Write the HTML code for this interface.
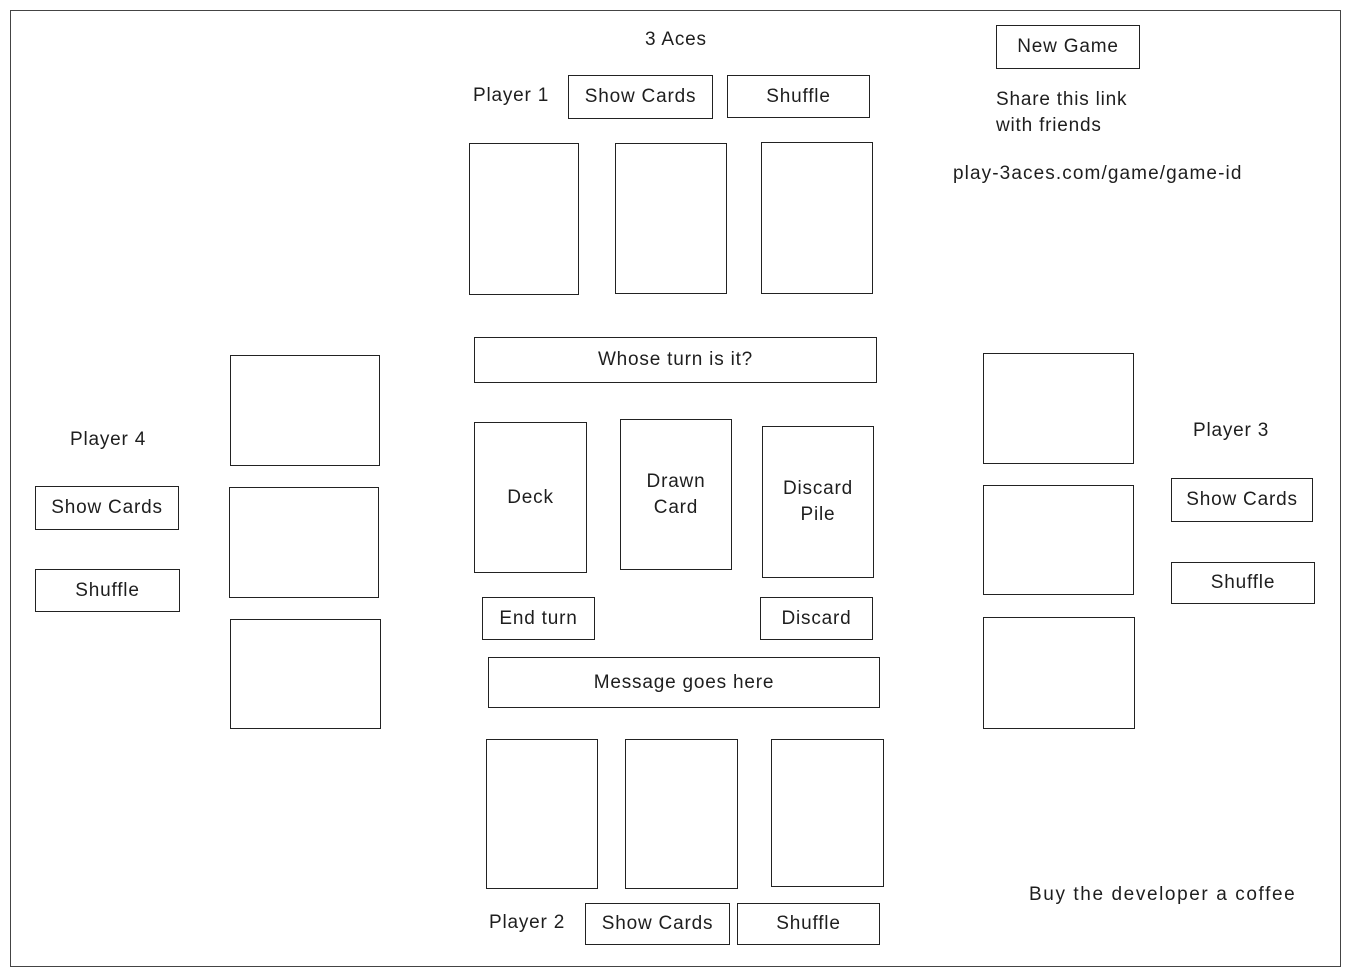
<!DOCTYPE html>
<html><head><meta charset="utf-8"><style>
body{margin:0;width:1349px;height:976px;background:#fff;position:relative;overflow:hidden;font-family:"Liberation Sans",sans-serif;color:#1e1e1e}
.b{position:absolute;border:1.8px solid #222;box-sizing:border-box;display:flex;align-items:center;justify-content:center;text-align:center;font-size:19px;line-height:26px;letter-spacing:0.8px}
.t{position:absolute;font-size:19px;white-space:nowrap;line-height:24px;letter-spacing:0.8px}
</style></head><body>
<div class="b" style="left:10px;top:10px;width:1331px;height:957px;border-color:#444"></div>
<div class="t" style="left:645px;top:28px">3 Aces</div>
<div class="b" style="left:996px;top:25px;width:144px;height:44px">New Game</div>
<div class="t" style="left:996px;top:87px;line-height:26px">Share this link<br>with friends</div>
<div class="t" style="left:953px;top:162px;letter-spacing:1.1px">play-3aces.com/game/game-id</div>

<div class="t" style="left:473px;top:84px">Player 1</div>
<div class="b" style="left:568px;top:75px;width:145px;height:44px">Show Cards</div>
<div class="b" style="left:727px;top:75px;width:143px;height:43px">Shuffle</div>
<div class="b" style="left:469px;top:143px;width:110px;height:152px"></div>
<div class="b" style="left:615px;top:143px;width:112px;height:151px"></div>
<div class="b" style="left:761px;top:142px;width:112px;height:152px"></div>

<div class="b" style="left:474px;top:337px;width:403px;height:46px">Whose turn is it?</div>
<div class="b" style="left:474px;top:422px;width:113px;height:151px">Deck</div>
<div class="b" style="left:620px;top:419px;width:112px;height:151px">Drawn<br>Card</div>
<div class="b" style="left:762px;top:426px;width:112px;height:152px">Discard<br>Pile</div>
<div class="b" style="left:482px;top:597px;width:113px;height:43px">End turn</div>
<div class="b" style="left:760px;top:597px;width:113px;height:43px">Discard</div>
<div class="b" style="left:488px;top:657px;width:392px;height:51px">Message goes here</div>

<div class="b" style="left:486px;top:739px;width:112px;height:150px"></div>
<div class="b" style="left:625px;top:739px;width:113px;height:150px"></div>
<div class="b" style="left:771px;top:739px;width:113px;height:148px"></div>
<div class="t" style="left:489px;top:911px">Player 2</div>
<div class="b" style="left:585px;top:903px;width:145px;height:42px">Show Cards</div>
<div class="b" style="left:737px;top:903px;width:143px;height:42px">Shuffle</div>
<div class="t" style="left:1029px;top:883px;letter-spacing:1.6px">Buy the developer a coffee</div>

<div class="b" style="left:230px;top:355px;width:150px;height:111px"></div>
<div class="b" style="left:229px;top:487px;width:150px;height:111px"></div>
<div class="b" style="left:230px;top:619px;width:151px;height:110px"></div>
<div class="t" style="left:70px;top:428px">Player 4</div>
<div class="b" style="left:35px;top:486px;width:144px;height:44px">Show Cards</div>
<div class="b" style="left:35px;top:569px;width:145px;height:43px">Shuffle</div>

<div class="b" style="left:983px;top:353px;width:151px;height:111px"></div>
<div class="b" style="left:983px;top:485px;width:151px;height:110px"></div>
<div class="b" style="left:983px;top:617px;width:152px;height:112px"></div>
<div class="t" style="left:1193px;top:419px">Player 3</div>
<div class="b" style="left:1171px;top:478px;width:142px;height:44px">Show Cards</div>
<div class="b" style="left:1171px;top:562px;width:144px;height:42px">Shuffle</div>
</body></html>
